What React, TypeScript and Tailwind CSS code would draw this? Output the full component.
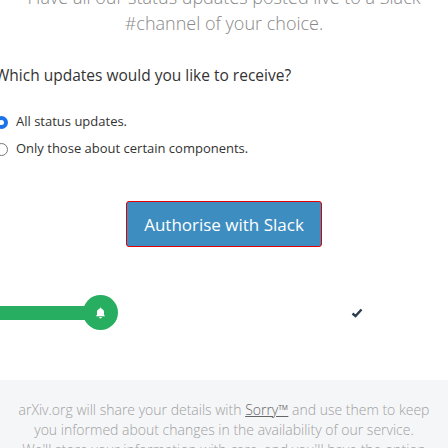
import React from "react";

const Radio = ({ checked, label }: { checked?: boolean; label: string }) => (
  <label className="flex items-center gap-[8px] h-[18px]">
    <span
      className={
        checked
          ? "w-[13px] h-[13px] rounded-full border-[4px] border-[#1a73e8] bg-white shrink-0"
          : "w-[13px] h-[13px] rounded-full border border-[#767676] bg-white shrink-0"
      }
    />
    <span className="text-[13px] text-[#333]">{label}</span>
  </label>
);

const Bell = () => (
  <svg width="13" height="14" viewBox="0 0 24 24" fill="white">
    <path d="M12 2a1.5 1.5 0 0 1 1.5 1.5v.6A6.5 6.5 0 0 1 18.5 10.5v4.5l2 3H3.5l2-3v-4.5A6.5 6.5 0 0 1 10.5 4.1v-.6A1.5 1.5 0 0 1 12 2z" />
    <path d="M9.5 19.5h5a2.5 2.5 0 0 1-5 0z" />
  </svg>
);

export default function App() {
  return (
    <div
      className="w-[448px] h-[448px] overflow-hidden bg-white flex flex-col"
      style={{ fontFamily: '"Open Sans", "Liberation Sans", sans-serif' }}
    >
      <div className="mt-[-16px] text-center text-[18px] leading-[26px] font-light text-[#888] px-[24px]">
        Have all our status updates posted live to a Slack
        <br />
        #channel of your choice.
      </div>

      <div className="ml-[-5px] mt-[28px] flex flex-col">
        <h3 className="text-[15.5px] leading-[22px] text-[#333] font-normal">
          Which updates would you like to receive?
        </h3>
        <div className="mt-[27px] flex flex-col gap-[9px]">
          <Radio checked label="All status updates." />
          <Radio label="Only those about certain components." />
        </div>
      </div>

      <div className="mt-[43px] flex justify-center">
        <button className="w-[196px] h-[46px] border border-[#e00000] bg-[#3d8dc1] text-white text-[17px] rounded-[3px] flex items-center justify-center pt-[1px]">
          Authorise with Slack
        </button>
      </div>

      <div className="mt-[48px] flex items-center h-[35px]">
        <div className="w-[86px] h-[14px] bg-[#27ae60]" />
        <div className="w-[35px] h-[35px] rounded-full bg-[#27ae60] flex items-center justify-center ml-[-3px]">
          <Bell />
        </div>
        <div className="ml-[233px]">
          <svg width="12" height="10" viewBox="0 0 12 10">
            <path d="M1.5 5.5l3 2.5 6-6.5" stroke="#2c3e50" strokeWidth="2.4" fill="none" />
          </svg>
        </div>
      </div>

      <div className="mt-[50px] flex-1 bg-[#f5f6f8] pt-[20px] px-[18px] text-center text-[14px] leading-[20px] font-light text-[#a0a0a0]">
        arXiv.org will share your details with{" "}
        <a className="underline text-[#666]">Sorry™</a> and use them to keep you
        informed about changes in the availability of our service. We'll
        store your information with care, and you'll have the option to
        unsubscribe at any time.
      </div>
    </div>
  );
}
